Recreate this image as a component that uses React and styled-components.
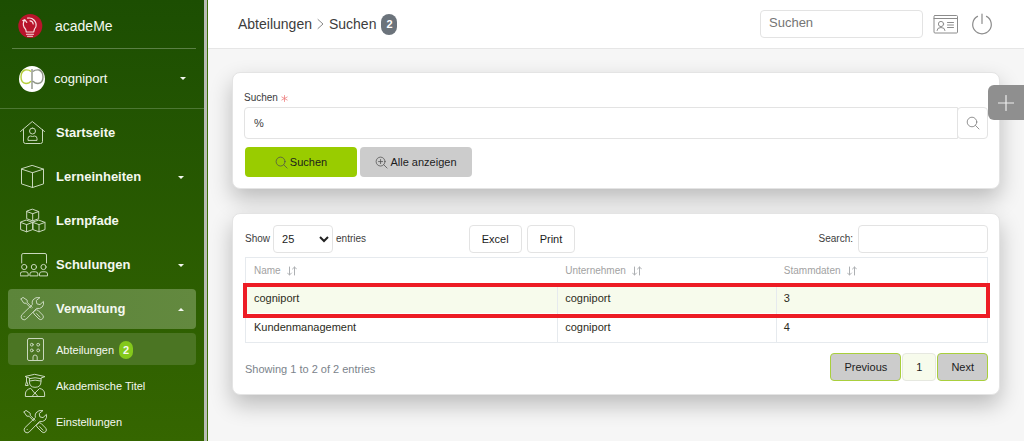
import React from "react";
import styled, { createGlobalStyle, css } from "styled-components";

const GlobalStyle = createGlobalStyle`
  *, *::before, *::after { box-sizing: border-box; }
  body {
    margin: 0;
    background: #f6f6f6;
    color: #3c3c3c;
    font: 11px/16px "Liberation Sans", Arial, sans-serif;
  }
  button, input, select { font: inherit; color: inherit; margin: 0; }
  a { color: inherit; text-decoration: none; }
`;

const Page = styled.div`
  display: flex;
  min-height: 100vh;
`;

/* Sidebar */

const Sidebar = styled.aside`
  flex: 0 0 208px;
  background: linear-gradient(#1c4e02, #356600);
  border-right: 1px solid #3d7008;
  color: #f4f8f0;
`;

const SidebarInner = styled.div`
  height: 100%;
  border-right: 3px solid #b9bdb6;
`;

const Brand = styled.a`
  display: flex;
  align-items: center;
  gap: 12px;
  height: 49px;
  margin: 0 8px 0 12px;
  padding: 4px 0 0 6px;
  border-bottom: 1px solid #5b8045;
  font-size: 14px;
`;

const UserButton = styled.button`
  display: flex;
  align-items: center;
  width: 100%;
  height: 60px;
  padding: 0 18px;
  border: 0;
  border-bottom: 1px solid #4d7733;
  background: none;
  font-size: 13px;
  text-align: left;
`;

const UserName = styled.span`
  flex: 1;
  margin-left: 8px;
`;

const Caret = styled.span`
  border: 3px solid transparent;
  border-top-color: #f4f8f0;
  border-bottom-width: 0;
  ${(p) =>
    p.$up &&
    css`
      border-top-width: 0;
      border-bottom: 3px solid #f4f8f0;
    `}
`;

const Nav = styled.nav`
  display: flex;
  flex-direction: column;
  gap: 4px;
  padding: 4px 8px;
`;

const NavItem = styled.a`
  display: flex;
  align-items: center;
  gap: 8px;
  height: ${(p) => (p.$sub ? 32 : 40)}px;
  padding: ${(p) => (p.$sub ? 1 : 0)}px 12px 0;
  border-radius: 4px;
  font-size: ${(p) => (p.$sub ? 11 : 13)}px;
  font-weight: ${(p) => (p.$sub ? 400 : 700)};
  background: ${(p) =>
    p.$active ? (p.$sub ? "#4b7523" : "linear-gradient(90deg, #5c853a, #63893f)") : "none"};
`;

const NavText = styled.span`
  flex: ${(p) => (p.$grow ? 1 : "none")};
`;

const NavBadge = styled.span`
  margin-left: -3px;
  padding: 1px 4px;
  border-radius: 8px;
  background: #84c81c;
  font-size: 11px;
  font-weight: 700;
  min-width: 14px;
  text-align: center;
`;

const LineIcon = styled.svg`
  flex: none;
  fill: none;
  stroke: ${(p) => p.$color || "#c9d8bd"};
  stroke-width: ${(p) => p.$weight || 1};
  stroke-linecap: round;
  stroke-linejoin: round;
`;

/* Header */

const Main = styled.main`
  flex: 1;
  min-width: 0;
`;

const Header = styled.header`
  display: flex;
  align-items: center;
  height: 49px;
  padding: 0 31px 0 30px;
  border-bottom: 1px solid #e6e6e6;
  background: #fff;
`;

const Breadcrumb = styled.nav`
  display: flex;
  flex: 1;
  align-items: center;
  gap: 5px;
  font-size: 14px;
`;

const CountBadge = styled.span`
  padding: 2px 4px;
  min-width: 16px;
  border-radius: 8px;
  background: #6b737b;
  color: #fff;
  font-size: 11px;
  line-height: 17px;
  font-weight: 700;
  text-align: center;
`;

const TextInput = styled.input`
  min-width: 0;
  height: 28px;
  padding: 0 8px;
  border: 1px solid #e3e3e3;
  border-radius: 4px;
  background: #fff;
  outline: 0;
  &::placeholder { color: #757575; opacity: 1; }
`;

const HeaderSearch = styled(TextInput)`
  width: 163px;
  padding-bottom: 3px;
  font-size: 13px;
`;

const IconButton = styled.button`
  display: flex;
  padding: 0;
  border: 0;
  background: none;
  margin-left: ${(p) => p.$gap}px;
`;

/* Content */

const Content = styled.div`
  display: flex;
  flex-direction: column;
  gap: 24px;
  padding: 23px 24px 24px;
`;

const Card = styled.section`
  padding: ${(p) => (p.$form ? "17px 11px 11px" : "11px 11px 13px")};
  border: 1px solid #e4e4e4;
  border-radius: 8px;
  background: #fff;
  box-shadow: 0 10px 22px rgba(0, 0, 0, 0.24);
`;

const FieldLabel = styled.label`
  display: flex;
  align-items: center;
  gap: 3px;
  margin-bottom: 1px;
  font-size: 10px;
`;

const InputGroup = styled.div`
  display: flex;
`;

const QueryInput = styled(TextInput)`
  flex: 1;
  height: 32px;
  padding: 0 9px;
  border-radius: 4px 0 0 4px;
`;

const GroupButton = styled.button`
  display: flex;
  align-items: center;
  justify-content: center;
  width: 31px;
  margin-left: -1px;
  padding: 0;
  border: 1px solid #e3e3e3;
  border-radius: 4px;
  background: #fff;
`;

const Actions = styled.div`
  display: flex;
  gap: 3px;
  margin-top: 8px;
  padding-left: 1px;
`;

const ActionButton = styled.button`
  display: flex;
  align-items: center;
  justify-content: center;
  gap: 2px;
  width: 112px;
  height: 30px;
  padding: 0;
  border: 0;
  border-radius: 4px;
  background: ${(p) => (p.$primary ? "#99cc00" : "#cccccc")};
  color: #1c1c1c;
`;

const Toolbar = styled.div`
  display: grid;
  grid-template-columns: 1fr auto 1fr;
  align-items: center;
  margin-bottom: 4px;
`;

const ToolLabel = styled.label`
  display: flex;
  align-items: center;
  justify-self: ${(p) => (p.$end ? "end" : "start")};
  gap: ${(p) => (p.$end ? 5 : 3)}px;
  font-size: 10px;
`;

const LengthSelect = styled.select`
  width: 60px;
  height: 28px;
  padding: 0 0 0 4px;
  border: 1px solid #e3e3e3;
  border-radius: 4px;
  background: #fff;
  color: #222;
  font-size: 11px;
`;

const FilterInput = styled(TextInput)`
  width: 130px;
`;

const ExportGroup = styled.div`
  display: flex;
  gap: 5px;
  margin-right: 189px;
`;

const ExportButton = styled.button`
  height: 28px;
  padding: 0 12px;
  border: 1px solid #e3e3e3;
  border-radius: 4px;
  background: #fff;
  color: #1c1c1c;
`;

const TableCard = styled(Card)`
  padding-left: 12px;
`;

const Table = styled.table`
  width: 100%;
  table-layout: fixed;
  border: 1px solid #e6eaee;
  border-spacing: 0;
`;

const Col = styled.col`
  width: ${(p) => p.$width};
`;

const HeadCell = styled.th`
  height: 26px;
  padding: 0 8px;
  color: #a2a2a2;
  font-size: 10px;
  font-weight: 400;
  text-align: left;
`;

const HeadLabel = styled.span`
  display: flex;
  align-items: center;
  gap: 6px;
`;

const Row = styled.tr`
  position: relative;
  background: ${(p) => (p.$marked ? "#f7fbec" : "#fff")};
  ${(p) =>
    p.$marked &&
    css`
      &::after {
        content: "";
        position: absolute;
        inset: -1px -3px -5px;
        z-index: 1;
        border: 4px solid #ed1c24;
      }
    `}
`;

const Cell = styled.td`
  height: 29px;
  padding: 0 8px 2px;
  color: #2c2c22;
  & + & {
    padding-left: 7px;
    border-left: 1px solid #e6eaee;
  }
`;

const TableFooter = styled.div`
  display: flex;
  align-items: center;
  justify-content: space-between;
  margin-top: 10px;
  color: #7b838b;
`;

const TableInfo = styled.span`
  padding-top: 4px;
`;

const Pager = styled.div`
  display: flex;
  gap: 1px;
`;

const PageButton = styled.button`
  height: 28px;
  padding: 0 13px;
  border: 1px solid ${(p) => (p.$current ? "#e6e8e0" : "#a9cf3c")};
  border-radius: 4px;
  background: ${(p) => (p.$current ? "#f7fbec" : "#cccccc")};
  color: #1c1c1c;
`;

const AddTab = styled.button`
  position: absolute;
  top: 85px;
  right: 0;
  display: flex;
  align-items: center;
  justify-content: center;
  width: 36px;
  height: 35px;
  padding: 0;
  border: 0;
  border-radius: 6px 0 0 6px;
  background: #8f8f8f;
`;

/* Drawings */

const cube = (cx, top, w, h, k) => {
  const l = cx - w / 2;
  const r = cx + w / 2;
  return `M${cx} ${top}L${r} ${top + k}V${top + h - k}L${cx} ${top + h}L${l} ${top + h - k}V${top + k}ZM${l} ${top + k}L${cx} ${top + 2 * k}L${r} ${top + k}M${cx} ${top + 2 * k}V${top + h}`;
};

const drawings = {
  home: (
    <path d="M.5 12.5 12.3 2.5 24.5 12.5M3.5 10.5V22.5Q3.5 24.5 5.5 24.5H20.5Q22.5 24.5 22.5 22.5V10.5M12.5 9A3 3 0 0 1 12.5 15A3 3 0 0 1 12.5 9M8 21V19.5Q8 17 10.5 17Q12.5 18 14.5 17Q17 17 17 19.5V21Z" />
  ),
  cube: <path d={cube(12.5, 2.5, 22, 22, 3.6)} />,
  cubes: (
    <path
      d={cube(12.7, 2.3, 12, 11.6, 2.2) + cube(6.6, 13.2, 12, 11.6, 2.2) + cube(19, 13.2, 12, 11.6, 2.2)}
    />
  ),
  training: (
    <>
      <path d="M1.7 12V4Q1.7 2.5 3.2 2.5H25Q26.5 2.5 26.5 4V12" />
      {[4.2, 13.9, 23.5].map((x) => (
        <g key={x}>
          <circle cx={x} cy="16" r="2.6" />
          <path d={`M${x - 4} 24.5V23Q${x - 4} 20.8 ${x - 1.6} 20.8H${x + 1.6}Q${x + 4} 20.8 ${x + 4} 23V24.5Z`} />
        </g>
      ))}
    </>
  ),
  tools: (
    <path d="M1 4 3 2.4 7.2 5.2V7.4L12.2 12.3M1 4 3.8 8.2H6L10.8 13M15.2 15.2Q16.5 14 18 15.3L22.8 20.2Q24.2 22 22.6 23.8Q20.8 25.4 19 24L14 19Q12.8 17.4 14 16.2ZM20 22.2 16.5 18.6M19.6 2.5Q15.4 1.8 13 4.8Q11.6 7 12.4 9.5L1.8 19.8Q.2 22 2 24Q4.2 25.8 6.2 24L16.6 13.4Q20 14.2 22.2 12Q24.3 9.4 23.4 6.4L20 9.6 16.9 8.9 16.3 5.9ZM4.2 21.4V21.5" />
  ),
  building: (
    <>
      <rect x="7.5" y="2.5" width="16" height="22" rx="1.5" />
      <path d="M13 24.5V21Q13 19 15 19Q17.2 19 17.2 21V24.5" />
      {[8.7, 14.4].map((y) => (
        <g key={y}>
          <circle cx="11.8" cy={y} r="1.4" />
          <circle cx="18.2" cy={y} r="1.4" />
        </g>
      ))}
    </>
  ),
  graduate: (
    <path d="M15 2.4 25 4.6 21 6V9.5Q21 15.3 15 15.3Q9.4 15.3 9.4 9.5V6L5.4 4.6ZM9.4 6.6Q15 4.8 21 6.6M9.4 9Q15 7.2 21 9M6.5 5V9.5M6.5 9.5 5.4 13.5H7.8ZM10.4 16.4Q5.4 17.5 5.4 22V24.5H24.6V22Q24.6 17.5 19.6 16.4L15 21ZM15 21 12 24.5M15 21 18 24.5" />
  ),
};

function NavIcon({ name, sub }) {
  return (
    <LineIcon width="28" height="28" viewBox={sub && name === "tools" ? "-3 0 28 28" : "0 0 28 28"} aria-hidden="true">
      {drawings[name]}
    </LineIcon>
  );
}

function SearchIcon({ size = 14, plus, color = "#4d4d4d" }) {
  return (
    <LineIcon width={size} height={size} viewBox="0 0 14 14" $color={color} $weight={0.8} aria-hidden="true">
      <circle cx="6" cy="6" r="4.8" />
      <path d={plus ? "M9.5 9.5 13 13M3.8 6H8.2M6 3.8V8.2" : "M9.5 9.5 13 13"} />
    </LineIcon>
  );
}

function SortIcon() {
  return (
    <LineIcon width="10" height="10" viewBox="0 0 10 10" $color="#adb0b3" aria-hidden="true">
      <path d="M2.5 1V9M.5 7 2.5 9 4.5 7M7.5 9V1M5.5 3 7.5 1 9.5 3" />
    </LineIcon>
  );
}

const navItems = [
  { label: "Startseite", icon: "home" },
  { label: "Lerneinheiten", icon: "cube", caret: true },
  { label: "Lernpfade", icon: "cubes" },
  { label: "Schulungen", icon: "training", caret: true },
  { label: "Verwaltung", icon: "tools", caret: true, active: true },
  { label: "Abteilungen", icon: "building", sub: true, active: true, badge: 2 },
  { label: "Akademische Titel", icon: "graduate", sub: true },
  { label: "Einstellungen", icon: "tools", sub: true },
];

const columns = [
  { label: "Name", width: "42%" },
  { label: "Unternehmen", width: "29.5%" },
  { label: "Stammdaten", width: "28.5%" },
];

const rows = [
  { name: "cogniport", company: "cogniport", count: 3, marked: true },
  { name: "Kundenmanagement", company: "cogniport", count: 4 },
];

export default function App() {
  return (
    <Page>
      <GlobalStyle />
      <Sidebar>
        <SidebarInner>
          <Brand href="#">
            <svg width="25" height="26" viewBox="0 0 25 26" aria-hidden="true">
              <circle cx="12.3" cy="13" r="12" fill="#b9142b" />
              <g fill="none" stroke="#f7dfe2" strokeLinecap="round">
                <path d="M8.2 18.5Q8.2 16.5 6 14A7.2 7.2 0 0 1 6.8 6.8M9.6 5.2A7 7 0 0 1 17.8 14Q15.8 16.5 15.8 18.5M8.8 9.3 6.8 6.8 4.8 7.6M12 7.8Q14.8 8 15.2 11" strokeWidth="1.2" />
                <path d="M8.3 19H15.7M8.5 21.2H15.5M9.5 23.2H14.5" strokeWidth="1.1" />
              </g>
            </svg>
            <span>acadeMe</span>
          </Brand>
          <UserButton type="button">
            <svg width="28" height="28" viewBox="0 0 28 28" aria-hidden="true">
              <circle cx="14" cy="14" r="13" fill="#fff" />
              <g fill="none" strokeWidth="1.4">
                <path d="M13 6.5Q11 4.5 7 5Q3 6.5 3 12Q3 18 8 18.5Q11.5 18.5 13 16" stroke="#b5ce3b" />
                <path d="M14 4V24M15 6.5Q17 4.5 21 5Q25 6.5 25 12Q25 18 20 18.5Q16.5 18.5 15 16" stroke="#8f9488" />
              </g>
            </svg>
            <UserName>cogniport</UserName>
            <Caret />
          </UserButton>
          <Nav aria-label="Hauptmenü">
            {navItems.map((item) => (
              <NavItem key={item.label} href="#" $sub={item.sub} $active={item.active}>
                <NavIcon name={item.icon} sub={item.sub} />
                <NavText $grow={item.caret}>{item.label}</NavText>
                {item.badge && <NavBadge>{item.badge}</NavBadge>}
                {item.caret && <Caret $up={item.active} />}
              </NavItem>
            ))}
          </Nav>
        </SidebarInner>
      </Sidebar>

      <Main>
        <Header>
          <Breadcrumb aria-label="Breadcrumb">
            <a href="#">Abteilungen</a>
            <LineIcon width="7" height="12" viewBox="0 0 7 12" $color="#8a8a8a" aria-hidden="true">
              <path d="M1 1.5 6 6 1 10.5" />
            </LineIcon>
            <span>Suchen</span>
            <CountBadge>2</CountBadge>
          </Breadcrumb>
          <HeaderSearch type="search" placeholder="Suchen" aria-label="Suchen" />
          <IconButton type="button" aria-label="Profil" $gap={10}>
            <LineIcon width="26" height="20" viewBox="0 0 26 20" $color="#8c8c8c" aria-hidden="true">
              <rect x="1" y="1.5" width="23.5" height="17.5" rx="1" />
              <path d="M1 4.5H24.5M14.5 8.5H20.5M14.5 11H20.5M14.5 13.5H20.5M4 16.5Q4 13.5 8 13.5Q12 13.5 12 16.5" />
              <circle cx="8" cy="10" r="2.6" />
            </LineIcon>
          </IconButton>
          <IconButton type="button" aria-label="Abmelden" $gap={12}>
            <LineIcon width="22" height="22" viewBox="0 0 22 22" $color="#8c8c8c" $weight={1.2} aria-hidden="true">
              <path d="M6.5 3.4A9.3 9.3 0 1 0 15.5 3.4M11 1V10.5" />
            </LineIcon>
          </IconButton>
        </Header>

        <Content>
          <Card $form>
            <FieldLabel htmlFor="query">
              Suchen
              <LineIcon width="7" height="7" viewBox="0 0 7 7" $color="#ee8080" $weight={0.8} aria-hidden="true">
                <path d="M3.5 .5V6.5M.8 2 6.2 5M6.2 2 .8 5" />
              </LineIcon>
            </FieldLabel>
            <InputGroup>
              <QueryInput id="query" defaultValue="%" />
              <GroupButton type="button" aria-label="Suche starten">
                <SearchIcon color="#777" />
              </GroupButton>
            </InputGroup>
            <Actions>
              <ActionButton type="submit" $primary>
                <SearchIcon size={13} />
                Suchen
              </ActionButton>
              <ActionButton type="button">
                <SearchIcon size={13} plus />
                Alle anzeigen
              </ActionButton>
            </Actions>
          </Card>

          <TableCard>
            <Toolbar>
              <ToolLabel>
                Show
                <LengthSelect defaultValue="25">
                  <option>25</option>
                  <option>50</option>
                </LengthSelect>
                entries
              </ToolLabel>
              <ExportGroup>
                <ExportButton type="button">Excel</ExportButton>
                <ExportButton type="button">Print</ExportButton>
              </ExportGroup>
              <ToolLabel $end>
                Search:
                <FilterInput type="search" />
              </ToolLabel>
            </Toolbar>
            <Table>
              <colgroup>
                {columns.map((c) => (
                  <Col key={c.label} $width={c.width} />
                ))}
              </colgroup>
              <thead>
                <tr>
                  {columns.map((c) => (
                    <HeadCell key={c.label} scope="col">
                      <HeadLabel>
                        {c.label}
                        <SortIcon />
                      </HeadLabel>
                    </HeadCell>
                  ))}
                </tr>
              </thead>
              <tbody>
                {rows.map((r) => (
                  <Row key={r.name} $marked={r.marked}>
                    <Cell>{r.name}</Cell>
                    <Cell>{r.company}</Cell>
                    <Cell>{r.count}</Cell>
                  </Row>
                ))}
              </tbody>
            </Table>
            <TableFooter>
              <TableInfo>Showing 1 to 2 of 2 entries</TableInfo>
              <Pager>
                <PageButton type="button">Previous</PageButton>
                <PageButton type="button" $current>1</PageButton>
                <PageButton type="button">Next</PageButton>
              </Pager>
            </TableFooter>
          </TableCard>
        </Content>
      </Main>

      <AddTab type="button" aria-label="Hinzufügen">
        <LineIcon width="16" height="16" viewBox="0 0 16 16" $color="#eeeeee" $weight={1.2} aria-hidden="true">
          <path d="M8 .5V15.5M.5 8H15.5" />
        </LineIcon>
      </AddTab>
    </Page>
  );
}
